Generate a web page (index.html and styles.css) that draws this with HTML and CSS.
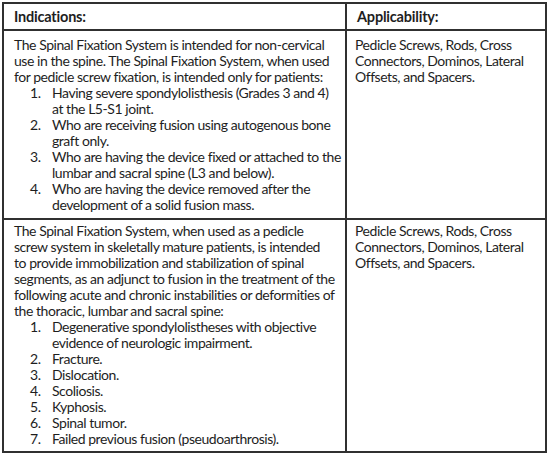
FILE: index.html
```html
<!DOCTYPE html>
<html>
<head>
<meta charset="utf-8">
<link rel="stylesheet" href="styles.css">
</head>
<body>
<table class="spec">
  <colgroup><col class="col-ind"><col class="col-app"></colgroup>
  <thead>
    <tr><th>Indications:</th><th>Applicability:</th></tr>
  </thead>
  <tbody>
    <tr class="row-one">
      <td>
        <p>The Spinal Fixation System is intended for non-cervical<br>use in the spine. The Spinal Fixation System, when used<br>for pedicle screw fixation, is intended only for patients:</p>
        <ol class="items">
          <li><span class="num">1.</span><span>Having severe spondylolisthesis (Grades 3 and 4)<br>at the L5-S1 joint.</span></li>
          <li><span class="num">2.</span><span>Who are receiving fusion using autogenous bone<br>graft only.</span></li>
          <li><span class="num">3.</span><span>Who are having the device fixed or attached to the<br>lumbar and sacral spine (L3 and below).</span></li>
          <li><span class="num">4.</span><span>Who are having the device removed after the<br>development of a solid fusion mass.</span></li>
        </ol>
      </td>
      <td><p>Pedicle Screws, Rods, Cross<br>Connectors, Dominos, Lateral<br>Offsets, and Spacers.</p></td>
    </tr>
    <tr class="row-two">
      <td>
        <p>The Spinal Fixation System, when used as a pedicle<br>screw system in skeletally mature patients, is intended<br>to provide immobilization and stabilization of spinal<br>segments, as an adjunct to fusion in the treatment of the<br>following acute and chronic instabilities or deformities of<br>the thoracic, lumbar and sacral spine:</p>
        <ol class="items">
          <li><span class="num">1.</span><span>Degenerative spondylolistheses with objective<br>evidence of neurologic impairment.</span></li>
          <li><span class="num">2.</span><span>Fracture.</span></li>
          <li><span class="num">3.</span><span>Dislocation.</span></li>
          <li><span class="num">4.</span><span>Scoliosis.</span></li>
          <li><span class="num">5.</span><span>Kyphosis.</span></li>
          <li><span class="num">6.</span><span>Spinal tumor.</span></li>
          <li><span class="num">7.</span><span>Failed previous fusion (pseudoarthrosis).</span></li>
        </ol>
      </td>
      <td><p>Pedicle Screws, Rods, Cross<br>Connectors, Dominos, Lateral<br>Offsets, and Spacers.</p></td>
    </tr>
  </tbody>
</table>
</body>
</html>
```
FILE: styles.css
```css
html, body {
  margin: 0;
  padding: 0;
  background: #ffffff;
}
body {
  padding: 2px 0 0 2px;
  font-family: "Lato", "Liberation Sans", sans-serif;
  font-size: 14px;
  line-height: 16px;
  letter-spacing: -0.45px;
  color: #1e1e1e;
}
.spec {
  border-collapse: collapse;
  table-layout: fixed;
  width: 543px;
}
.col-ind { width: 343px; }
.col-app { width: 200px; }
.spec th,
.spec td {
  border: 2px solid #303030;
  vertical-align: top;
  text-align: left;
  white-space: nowrap;
}
.spec th {
  font-weight: bold;
  height: 27px;
  box-sizing: border-box;
  padding: 4px 8px 3px 10px;
  font-size: 14.5px;
  line-height: 18px;
  letter-spacing: -0.2px;
}
.spec td {
  padding: 6px 6px 4px 10px;
}
.row-one td { height: 189px; box-sizing: border-box; }
.row-two td { padding-top: 3px; height: 231px; box-sizing: border-box; }
.spec td:last-child { padding-left: 8px; }
p { margin: 0; }
.items {
  list-style: none;
  margin: 0;
  padding: 0 0 0 16px;
}
.items li {
  display: grid;
  grid-template-columns: 22px 1fr;
}
```
